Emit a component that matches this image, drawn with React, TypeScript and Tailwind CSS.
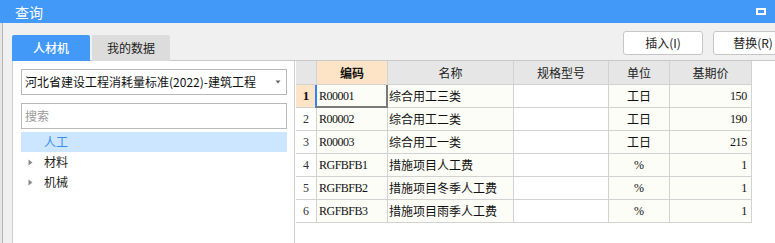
import React from "react";

const rows = [
  { n: "1", code: "R00001", name: "综合用工三类", unit: "工日", price: "150" },
  { n: "2", code: "R00002", name: "综合用工二类", unit: "工日", price: "190" },
  { n: "3", code: "R00003", name: "综合用工一类", unit: "工日", price: "215" },
  { n: "4", code: "RGFBFB1", name: "措施项目人工费", unit: "%", price: "1" },
  { n: "5", code: "RGFBFB2", name: "措施项目冬季人工费", unit: "%", price: "1" },
  { n: "6", code: "RGFBFB3", name: "措施项目雨季人工费", unit: "%", price: "1" },
];

function Triangle() {
  return (
    <svg width="5" height="7" viewBox="0 0 5 7" className="shrink-0">
      <path d="M0.5 0.5 L4.5 3.5 L0.5 6.5 Z" fill="#8a8a8a" />
    </svg>
  );
}

export default function App() {
  return (
    <div className="w-[775px] h-[243px] overflow-hidden bg-[#f0f0f0] flex flex-col font-['Noto_Sans_CJK_SC',sans-serif] text-[12px] text-[#222]">
      {/* Title bar */}
      <div className="h-[23px] shrink-0 bg-[#4399f7] flex items-center justify-between pl-[15px] pr-[9px]">
        <span className="text-white text-[14px] leading-none">查询</span>
        <div className="w-[10px] h-[7px] border-2 border-white" />
      </div>

      {/* Body */}
      <div className="flex-1 flex min-h-0">
        <div className="w-[3px] shrink-0 bg-[#e6e6e6] border-r border-[#b4b4b4]" />

        {/* Left column */}
        <div className="w-[292px] shrink-0 pl-[9px] pt-[12px] flex flex-col">
          <div className="h-[26px] flex shrink-0">
            <div className="w-[78px] h-full bg-[#4399f7] text-white flex items-center justify-center rounded-t-[2px] font-medium">
              人材机
            </div>
            <div className="w-[2px] h-full border-b border-[#c8c8c8]" />
            <div className="w-[78px] h-full bg-[#dcdcdc] text-[#222] flex items-center justify-center rounded-t-[2px]">
              我的数据
            </div>
            <div className="flex-1 h-full border-b border-[#c8c8c8]" />
          </div>
          <div className="flex-1 bg-white border-l border-r border-[#cfcfcf] pl-[8px] pr-[7px] pt-[8px] flex flex-col">
            <div className="h-[26px] border border-[#b8b8b8] flex items-center justify-between pl-[3px] pr-[5px] shrink-0">
              <span className="text-[12px] text-[#111] whitespace-nowrap">河北省建设工程消耗量标准(2022)-建筑工程</span>
              <svg width="6" height="4" viewBox="0 0 6 4">
                <path d="M0.5 0.5 L5.5 0.5 L3 3.5 Z" fill="#666" />
              </svg>
            </div>
            <div className="h-[26px] mt-[8px] border border-[#b8b8b8] flex items-center pl-[3px] shrink-0">
              <span className="text-[#9a9a9a]">搜索</span>
            </div>
            <div className="mt-[3px] flex flex-col">
              <div className="h-[20px] bg-[#cce6ff] flex items-center pl-[23px]">
                <span className="text-[#3a8cf0]">人工</span>
              </div>
              <div className="h-[20px] flex items-center pl-[7px] gap-[11px]">
                <Triangle />
                <span>材料</span>
              </div>
              <div className="h-[20px] flex items-center pl-[7px] gap-[11px]">
                <Triangle />
                <span>机械</span>
              </div>
            </div>
          </div>
        </div>

        {/* Right column */}
        <div className="flex-1 flex flex-col min-w-0">
          <div className="h-[37px] shrink-0 flex items-start pt-[8px] pl-[328px] gap-[10px] overflow-hidden">
            <div className="w-[80px] h-[24px] shrink-0 bg-white border border-[#c6c6c6] rounded-[3px] flex items-center justify-center text-[#222]">
              插入(I)
            </div>
            <div className="w-[80px] h-[24px] shrink-0 bg-white border border-[#c6c6c6] rounded-[3px] flex items-center justify-center text-[#222]">
              替换(R)
            </div>
          </div>
          <div className="flex-1 bg-white border-t border-[#c8c8c8] pl-[1px]">
            {/* Header */}
            <div className="flex h-[24px]">
              <div className="w-[21px] h-full bg-[#e6e6e6] border-r border-b border-[#d2d2d2]" />
              <div className="w-[71px] h-full bg-[#fde4c6] border-r border-b border-[#d2d2d2] flex items-center justify-center font-bold text-[#111]">
                编码
              </div>
              <div className="w-[126px] h-full bg-[#e6e6e6] border-r border-b border-[#d2d2d2] flex items-center justify-center">
                名称
              </div>
              <div className="w-[95px] h-full bg-[#e6e6e6] border-r border-b border-[#d2d2d2] flex items-center justify-center">
                规格型号
              </div>
              <div className="w-[61px] h-full bg-[#e6e6e6] border-r border-b border-[#d2d2d2] flex items-center justify-center">
                单位
              </div>
              <div className="w-[82px] h-full bg-[#e6e6e6] border-r border-b border-[#d2d2d2] flex items-center justify-center">
                基期价
              </div>
            </div>
            {rows.map((r, i) => (
              <div key={r.n} className="flex h-[23px]">
                <div
                  className={
                    i === 0
                      ? "w-[21px] h-full bg-[#fde4c6] border-r border-b border-[#d2d2d2] flex items-center justify-center font-['Liberation_Serif',serif] font-bold text-[13px] text-[#111]"
                      : "w-[21px] h-full bg-white border-r border-b border-[#d2d2d2] flex items-center justify-center font-['Liberation_Serif',serif] text-[12px] text-[#333]"
                  }
                >
                  {r.n}
                </div>
                <div className="relative w-[71px] h-full bg-[#fdfdf7] border-r border-b border-[#d2d2d2] flex items-center pl-[2px] font-['Liberation_Serif',serif] text-[12px] tracking-[-0.5px] text-[#111]">
                  {r.code}
                  {i === 0 && (
                    <div className="absolute left-[-2px] top-0 right-[-1px] bottom-[-1px] border-l-2 border-l-[#2f86f0] border-r-2 border-r-[#7a7a7a] border-b-2 border-b-[#7a7a7a]" />
                  )}
                </div>
                <div className="w-[126px] h-full bg-[#fdfdf7] border-r border-b border-[#d2d2d2] flex items-center pl-[1px] text-[#111] whitespace-nowrap">
                  {r.name}
                </div>
                <div className="w-[95px] h-full bg-white border-r border-b border-[#d2d2d2]" />
                <div
                  className={
                    r.unit === "%"
                      ? "w-[61px] h-full bg-[#fdfdf7] border-r border-b border-[#d2d2d2] flex items-center justify-center font-['Liberation_Serif',serif] text-[12px] text-[#111]"
                      : "w-[61px] h-full bg-[#fdfdf7] border-r border-b border-[#d2d2d2] flex items-center justify-center text-[#111]"
                  }
                >
                  {r.unit}
                </div>
                <div className="w-[82px] h-full bg-[#fdfdf7] border-r border-b border-[#d2d2d2] flex items-center justify-end pr-[4px] font-['Liberation_Serif',serif] text-[12px] tracking-[-0.3px] text-[#111]">
                  {r.price}
                </div>
              </div>
            ))}
          </div>
        </div>
      </div>
    </div>
  );
}
